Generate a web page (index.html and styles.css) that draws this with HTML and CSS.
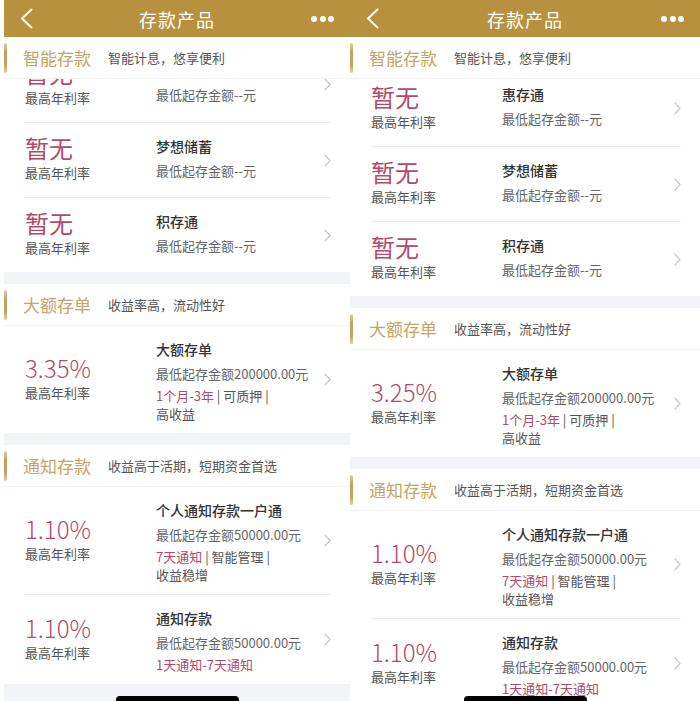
FILE: index.html
```html
<!DOCTYPE html>
<html lang="zh-CN">
<head>
    <meta charset="UTF-8">
    <meta name="viewport" content="width=device-width, initial-scale=1.0">
    <title>存款产品</title>
    <link rel="stylesheet" href="styles.css">
</head>
<body>
<div class="screens">

<!--  left screen, scrolled a bit further  -->
  <div class="phone phone-left">
    <div class="nav">
      <svg class="nav-back" width="13" height="21" viewBox="0 0 13 21"><polyline points="11.5,1.5 2,10.5 11.5,19.5"/></svg>
      <span class="nav-title">存款产品</span>
      <span class="nav-more"><i></i><i></i><i></i></span>
    </div>

    <div class="sec sec-first">
      <div class="sec-head"><span class="sec-title">智能存款</span><span class="sec-desc">智能计息，悠享便利</span></div>
      <div class="sec-rows">
        <div class="row">
          <div class="rate"><div class="rate-val">暂无</div><div class="rate-label">最高年利率</div></div>
          <div class="info"><div class="name">惠存通</div><div class="amount">最低起存金额--元</div></div>
          <svg class="arrow" width="7" height="13" viewBox="0 0 7 13"><polyline points="1,1 6,6.5 1,12"/></svg>
        </div>
        <div class="row">
          <div class="rate"><div class="rate-val">暂无</div><div class="rate-label">最高年利率</div></div>
          <div class="info"><div class="name">梦想储蓄</div><div class="amount">最低起存金额--元</div></div>
          <svg class="arrow" width="7" height="13" viewBox="0 0 7 13"><polyline points="1,1 6,6.5 1,12"/></svg>
        </div>
        <div class="row">
          <div class="rate"><div class="rate-val">暂无</div><div class="rate-label">最高年利率</div></div>
          <div class="info"><div class="name">积存通</div><div class="amount">最低起存金额--元</div></div>
          <svg class="arrow" width="7" height="13" viewBox="0 0 7 13"><polyline points="1,1 6,6.5 1,12"/></svg>
        </div>
      </div>
    </div>

    <div class="sec">
      <div class="sec-head"><span class="sec-title">大额存单</span><span class="sec-desc">收益率高，流动性好</span></div>
      <div class="sec-rows">
        <div class="row">
          <div class="rate"><div class="rate-val rate-num">3.35%</div><div class="rate-label">最高年利率</div></div>
          <div class="info">
            <div class="name">大额存单</div>
            <div class="amount">最低起存金额200000.00元</div>
            <div class="tags"><span class="tag tag-hl">1个月-3年</span> | <span class="tag">可质押</span> | <span class="tag">高收益</span></div>
          </div>
          <svg class="arrow" width="7" height="13" viewBox="0 0 7 13"><polyline points="1,1 6,6.5 1,12"/></svg>
        </div>
      </div>
    </div>

    <div class="sec">
      <div class="sec-head"><span class="sec-title">通知存款</span><span class="sec-desc">收益高于活期，短期资金首选</span></div>
      <div class="sec-rows">
        <div class="row">
          <div class="rate"><div class="rate-val rate-num">1.10%</div><div class="rate-label">最高年利率</div></div>
          <div class="info">
            <div class="name">个人通知存款一户通</div>
            <div class="amount">最低起存金额50000.00元</div>
            <div class="tags"><span class="tag tag-hl">7天通知</span> | <span class="tag">智能管理</span> | <span class="tag">收益稳增</span></div>
          </div>
          <svg class="arrow" width="7" height="13" viewBox="0 0 7 13"><polyline points="1,1 6,6.5 1,12"/></svg>
        </div>
        <div class="row">
          <div class="rate"><div class="rate-val rate-num">1.10%</div><div class="rate-label">最高年利率</div></div>
          <div class="info">
            <div class="name">通知存款</div>
            <div class="amount">最低起存金额50000.00元</div>
            <div class="tags"><span class="tag tag-hl">1天通知-7天通知</span></div>
          </div>
          <svg class="arrow" width="7" height="13" viewBox="0 0 7 13"><polyline points="1,1 6,6.5 1,12"/></svg>
        </div>
      </div>
    </div>
    <div class="home-bar"></div>
  </div>

<!--  right screen  -->
  <div class="phone phone-right">
    <div class="nav">
      <svg class="nav-back" width="13" height="21" viewBox="0 0 13 21"><polyline points="11.5,1.5 2,10.5 11.5,19.5"/></svg>
      <span class="nav-title">存款产品</span>
      <span class="nav-more"><i></i><i></i><i></i></span>
    </div>

    <div class="sec sec-first">
      <div class="sec-head"><span class="sec-title">智能存款</span><span class="sec-desc">智能计息，悠享便利</span></div>
      <div class="sec-rows">
        <div class="row">
          <div class="rate"><div class="rate-val">暂无</div><div class="rate-label">最高年利率</div></div>
          <div class="info"><div class="name">惠存通</div><div class="amount">最低起存金额--元</div></div>
          <svg class="arrow" width="7" height="13" viewBox="0 0 7 13"><polyline points="1,1 6,6.5 1,12"/></svg>
        </div>
        <div class="row">
          <div class="rate"><div class="rate-val">暂无</div><div class="rate-label">最高年利率</div></div>
          <div class="info"><div class="name">梦想储蓄</div><div class="amount">最低起存金额--元</div></div>
          <svg class="arrow" width="7" height="13" viewBox="0 0 7 13"><polyline points="1,1 6,6.5 1,12"/></svg>
        </div>
        <div class="row">
          <div class="rate"><div class="rate-val">暂无</div><div class="rate-label">最高年利率</div></div>
          <div class="info"><div class="name">积存通</div><div class="amount">最低起存金额--元</div></div>
          <svg class="arrow" width="7" height="13" viewBox="0 0 7 13"><polyline points="1,1 6,6.5 1,12"/></svg>
        </div>
      </div>
    </div>

    <div class="sec">
      <div class="sec-head"><span class="sec-title">大额存单</span><span class="sec-desc">收益率高，流动性好</span></div>
      <div class="sec-rows">
        <div class="row">
          <div class="rate"><div class="rate-val rate-num">3.25%</div><div class="rate-label">最高年利率</div></div>
          <div class="info">
            <div class="name">大额存单</div>
            <div class="amount">最低起存金额200000.00元</div>
            <div class="tags"><span class="tag tag-hl">1个月-3年</span> | <span class="tag">可质押</span> | <span class="tag">高收益</span></div>
          </div>
          <svg class="arrow" width="7" height="13" viewBox="0 0 7 13"><polyline points="1,1 6,6.5 1,12"/></svg>
        </div>
      </div>
    </div>

    <div class="sec">
      <div class="sec-head"><span class="sec-title">通知存款</span><span class="sec-desc">收益高于活期，短期资金首选</span></div>
      <div class="sec-rows">
        <div class="row">
          <div class="rate"><div class="rate-val rate-num">1.10%</div><div class="rate-label">最高年利率</div></div>
          <div class="info">
            <div class="name">个人通知存款一户通</div>
            <div class="amount">最低起存金额50000.00元</div>
            <div class="tags"><span class="tag tag-hl">7天通知</span> | <span class="tag">智能管理</span> | <span class="tag">收益稳增</span></div>
          </div>
          <svg class="arrow" width="7" height="13" viewBox="0 0 7 13"><polyline points="1,1 6,6.5 1,12"/></svg>
        </div>
        <div class="row">
          <div class="rate"><div class="rate-val rate-num">1.10%</div><div class="rate-label">最高年利率</div></div>
          <div class="info">
            <div class="name">通知存款</div>
            <div class="amount">最低起存金额50000.00元</div>
            <div class="tags"><span class="tag tag-hl">1天通知-7天通知</span></div>
          </div>
          <svg class="arrow" width="7" height="13" viewBox="0 0 7 13"><polyline points="1,1 6,6.5 1,12"/></svg>
        </div>
      </div>
    </div>
    <div class="home-bar"></div>
  </div>

</div>
</body>
</html>
```

FILE: styles.css
```css
body {
margin:0;
padding:0;
background:#fff;
font-family:"Noto Sans CJK SC", "Noto Sans", sans-serif;
color:#333;
}

.screens {
display:flex;
height:701px;
padding-left:4px;
}

/* one phone screen */
.phone {
position:relative;
width:346px;
height:701px;
overflow:hidden;
background:#f3f4f8;
}
.phone-right {
width:350px;
}

/* gold navigation bar */
.nav {
display:grid;
grid-template-columns:1fr auto 1fr;
align-items:center;
height:37px;
padding:0 16px;
background:#b8913e;
position:relative;
z-index:2;
}
.nav-back polyline {
fill:none;
stroke:#fff;
stroke-width:2;
stroke-linecap:round;
stroke-linejoin:round;
}
.nav-back {
display:block;
}
.nav-title {
font-size:18px;
color:#fff;
letter-spacing:1px;
}
.nav-more {
justify-self:end;
display:flex;
gap:2.5px;
}
.nav-more i {
width:6px;
height:6px;
border-radius:50%;
background:#fff;
}

/* sections */
.sec {
background:#fff;
}
.sec + .sec {
margin-top:12px;
}
.sec-head {
display:flex;
align-items:center;
height:42px;
background:#fff;
border-bottom:1px solid #f3f3f3;
box-sizing:border-box;
/* header sits above rows that are scrolled under it */
position:relative;
z-index:1;
}
.sec-head::before {
content:"";
width:3px;
height:30px;
border-radius:2px;
background:linear-gradient(#e3cf9f, #c2a05e 30%, #c2a05e 70%, #e3cf9f);
margin-right:16px;
}
.sec-title {
font-size:17px;
color:#c6a367;
}
.sec-desc {
margin-left:17px;
font-size:13px;
color:#555;
}

/* scroll offset of each screen */
.phone-left .sec-first .sec-rows {
margin-top:-32px;
}
.phone-right .sec-first .sec-rows {
margin-top:-8px;
}

/* product rows */
.row {
display:flex;
align-items:center;
min-height:75px;
margin:0 19px 0 21px;
box-sizing:border-box;
}
.row + .row {
border-top:1px solid #ececec;
}
.rate {
flex:0 0 131px;
padding-bottom:2px;
}
.rate-val {
font-size:24px;
line-height:28px;
color:#b24a6c;
}
.rate-num {
font-weight:300;
}
.rate-label {
font-size:13px;
line-height:22px;
color:#555;
}
.info {
flex:1;
align-self:flex-start;
padding:12px 0 10px;
}
.name {
font-size:14px;
line-height:22px;
font-weight:500;
color:#333;
}
.amount {
margin-top:3px;
font-size:13px;
line-height:22px;
color:#666;
}
.tags {
margin-top:2px;
max-width:140px;
font-size:13px;
line-height:18px;
color:#555;
}
/* keep each tag on one line, wrap only between tags */
.tag {
white-space:nowrap;
}
.tag-hl {
color:#b24a6c;
}
.arrow {
flex:none;
}
.arrow polyline {
fill:none;
stroke:#c8c8c8;
stroke-width:1.2;
stroke-linecap:round;
stroke-linejoin:round;
}

/* iphone home indicator over the content */
.home-bar {
position:absolute;
left:50%;
bottom:-3px;
width:123px;
height:8px;
margin-left:-61px;
border-radius:4px;
background:#000;
z-index:3;
}
```
